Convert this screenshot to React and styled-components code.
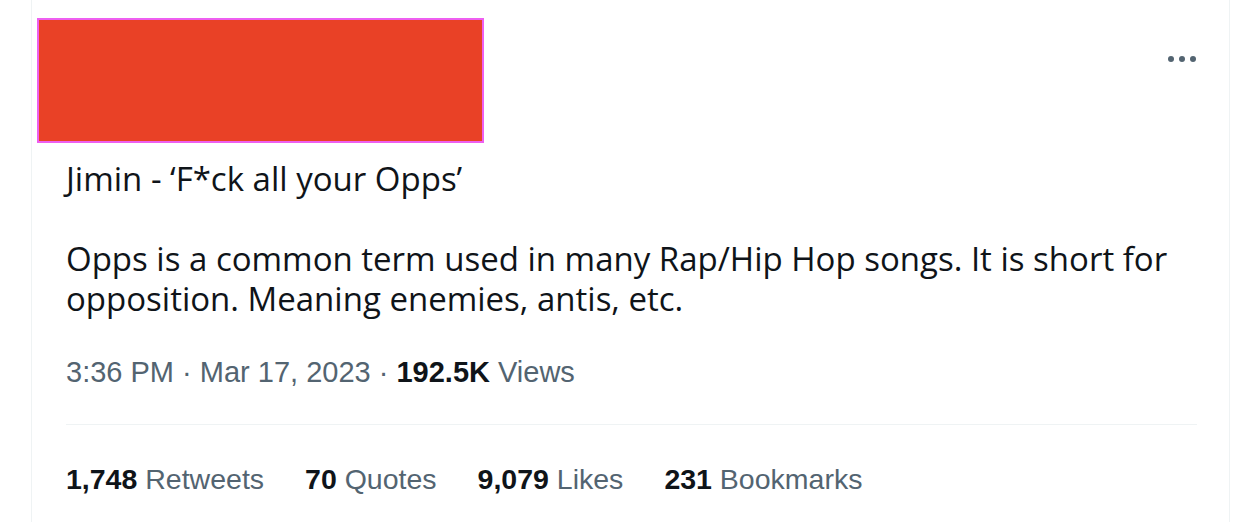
import React from 'react'
import styled, { createGlobalStyle } from "styled-components";

const GlobalStyle = createGlobalStyle`
body {
  margin: 0;
  background: #ffffff;
  font-family: "Liberation Sans", Arial, sans-serif;
}
`

const Card = styled.div`
margin-left: 31px;
width: 1197px;
height: 522px;
border-left: 1px solid #eff3f4;
border-right: 1px solid #eff3f4;
`

const Header = styled.div`
display: flex;
justify-content: space-between;
align-items: flex-start;
padding: 18px 33px 0 5px;
`

const Redacted = styled.div`
width: 443px;
height: 121px;
background: #e94126;
border: 2px solid #ee5ff0;
`

const MoreButton = styled.div`
display: flex;
gap: 5px;
margin-top: 38px;
`

const Dot = styled.span`
width: 6px;
height: 6px;
border-radius: 50%;
background: #536471;
`

const Body = styled.div`
padding: 0 32px 0 34px;
`

const TweetText = styled.p`
margin: 16px 0 0;
font-family: "Open Sans", "Noto Sans", sans-serif;
font-size: 33px;
line-height: 40px;
color: #0f1419;
white-space: pre-wrap;
`

const Meta = styled.div`
margin-top: 36px;
font-size: 29px;
line-height: 34px;
color: #536471;
`

const Strong = styled.span`
font-weight: bold;
color: #0f1419;
`

const Divider = styled.hr`
margin: 35px 0 0;
border: none;
border-top: 1px solid #eff3f4;
`

const Stats = styled.div`
display: flex;
gap: 41px;
margin-top: 37px;
font-size: 28.5px;
line-height: 34px;
color: #536471;
`

const Stat = ({ value, label }) => (
  <span>
    <Strong>{value}</Strong> {label}
  </span>
)

const App = () => {
  return (
    <>
      <GlobalStyle />
      <Card>
        <Header>
          <Redacted />
          <MoreButton>
            <Dot />
            <Dot />
            <Dot />
          </MoreButton>
        </Header>
        <Body>
          <TweetText>
            {"Jimin - \u2018F*ck all your Opps\u2019\n\nOpps is a common term used in many Rap/Hip Hop songs. It is short for opposition. Meaning enemies, antis, etc."}
          </TweetText>
          <Meta>
            3:36 PM · Mar 17, 2023 · <Strong>192.5K</Strong> Views
          </Meta>
          <Divider />
          <Stats>
            <Stat value="1,748" label="Retweets" />
            <Stat value="70" label="Quotes" />
            <Stat value="9,079" label="Likes" />
            <Stat value="231" label="Bookmarks" />
          </Stats>
        </Body>
      </Card>
    </>
  )
}

export default App;
